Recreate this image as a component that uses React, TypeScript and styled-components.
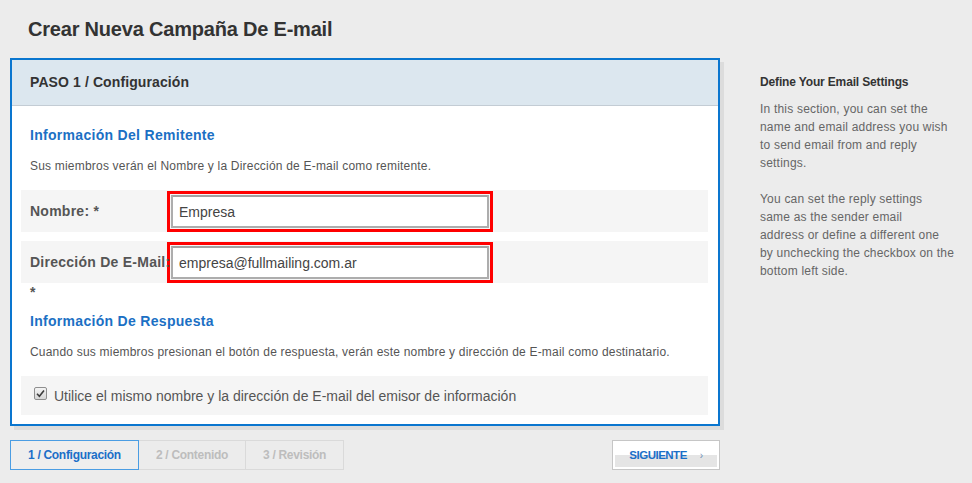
import React from "react";
import styled, { createGlobalStyle } from "styled-components";

const GlobalStyle = createGlobalStyle`
  html, body {
    margin: 0;
    padding: 0;
    background: #ececec;
  }
  body {
    font-family: "Liberation Sans", Arial, sans-serif;
    color: #555;
  }
  * {
    box-sizing: border-box;
  }
`;

const Page = styled.div`
  width: 972px;
  height: 483px;
  overflow: hidden;
`;

const PageTitle = styled.h1`
  margin: 0;
  padding-left: 28px;
  height: 58px;
  line-height: 58px;
  font-size: 20px;
  font-weight: bold;
  letter-spacing: -0.2px;
  color: #333;
`;

const Layout = styled.div`
  display: flex;
  align-items: flex-start;
  padding-left: 10px;
`;

const MainColumn = styled.div`
  width: 710px;
  flex-shrink: 0;
`;

const Panel = styled.section`
  border: 2px solid #0a76cf;
  background: #fff;
  box-shadow: 4px 4px 0 #dcdcdc;
`;

const PanelHeader = styled.div`
  height: 46px;
  line-height: 45px;
  background: #dce7ef;
  border-bottom: 1px solid #c3ccd4;
  padding-left: 18px;
  font-size: 14px;
  font-weight: bold;
  letter-spacing: 0.1px;
  color: #333;
`;

const PanelBody = styled.div`
  padding: 0 10px 9px 9px;
`;

const SectionTitle = styled.h2<{ $top: number }>`
  margin: ${(p) => p.$top}px 0 0 9px;
  font-size: 14px;
  line-height: 20px;
  font-weight: bold;
  letter-spacing: 0.3px;
  color: #1b70c4;
`;

const Description = styled.p`
  margin: 13px 0 0 9px;
  font-size: 12px;
  line-height: 16px;
  letter-spacing: 0.2px;
  color: #555;
`;

const FieldRow = styled.div<{ $top: number }>`
  display: flex;
  height: 42px;
  margin-top: ${(p) => p.$top}px;
  background: #f5f5f5;
`;

const FieldLabel = styled.label`
  position: relative;
  z-index: 1;
  width: 146px;
  flex-shrink: 0;
  padding: 6px 0 0 9px;
  font-size: 14px;
  line-height: 30px;
  font-weight: bold;
  letter-spacing: 0.25px;
  color: #555;
`;

const NoWrap = styled.span`
  white-space: nowrap;
`;

const Highlight = styled.div`
  width: 326px;
  height: 41px;
  margin-top: 1px;
  padding: 1px;
  border: 3px solid #f00;
`;

const TextInput = styled.input`
  display: block;
  width: 100%;
  height: 100%;
  margin: 0;
  padding: 0 6px;
  border: 2px solid #adadad;
  border-top-color: #a2a2a2;
  background: #fff;
  font-family: "Liberation Sans", Arial, sans-serif;
  font-size: 14px;
  color: #444;
  outline: none;
`;

const CheckRow = styled.label`
  display: flex;
  align-items: center;
  height: 39px;
  margin-top: 16px;
  padding-left: 13px;
  background: #f5f5f5;
  font-size: 14px;
  color: #555;
`;

const CheckBox = styled.span`
  display: flex;
  align-items: center;
  justify-content: center;
  width: 13px;
  height: 13px;
  margin-bottom: 4px;
  border: 1px solid #8f8f8f;
  border-radius: 2px;
  background: linear-gradient(#f4f4f4, #d6d6d6);
`;

const CheckText = styled.span`
  margin-left: 7px;
`;

const NavBar = styled.div`
  display: flex;
  justify-content: space-between;
  margin-top: 14px;
`;

const Tabs = styled.div`
  display: flex;
`;

const Tab = styled.div<{ $active?: boolean }>`
  position: relative;
  z-index: ${(p) => (p.$active ? 1 : 0)};
  height: 30px;
  padding: 0 17px;
  margin-left: -1px;
  line-height: 28px;
  border: 1px solid ${(p) => (p.$active ? "#4a9de3" : "#dadada")};
  background: ${(p) => (p.$active ? "#eeeeee" : "transparent")};
  font-size: 12px;
  font-weight: bold;
  letter-spacing: -0.3px;
  color: ${(p) => (p.$active ? "#1b6fc8" : "#bdbdbd")};
  &:first-child {
    margin-left: 0;
  }
`;

const NextButton = styled.button`
  display: flex;
  align-items: center;
  justify-content: center;
  gap: 13px;
  width: 108px;
  height: 30px;
  margin: 0;
  padding: 0;
  border: 1px solid #c6c6c6;
  background: linear-gradient(#fff 50%, #e5e5e5 50%);
  box-shadow: inset 0 0 0 2px #fff;
  font-family: "Liberation Sans", Arial, sans-serif;
  font-size: 11.5px;
  font-weight: bold;
  letter-spacing: -0.5px;
  color: #1b6fc8;
  cursor: pointer;
`;

const Chevron = styled.span`
  font-size: 10px;
  font-weight: normal;
  color: #6d8fb8;
`;

const Sidebar = styled.aside`
  width: 200px;
  margin-left: 40px;
  padding-top: 15px;
`;

const SideTitle = styled.h3`
  margin: 0;
  font-size: 12px;
  line-height: 18px;
  font-weight: bold;
  letter-spacing: -0.15px;
  color: #333;
`;

const SideText = styled.p<{ $top: number }>`
  margin: ${(p) => p.$top}px 0 0;
  font-size: 12px;
  line-height: 18px;
  letter-spacing: 0.2px;
  white-space: nowrap;
  color: #666;
`;

export default function App() {
  return (
    <Page>
      <GlobalStyle />
      <PageTitle>Crear Nueva Campaña De E-mail</PageTitle>
      <Layout>
        <MainColumn>
          <Panel>
            <PanelHeader>PASO 1 / Configuración</PanelHeader>
            <PanelBody>
              <SectionTitle $top={19}>Información Del Remitente</SectionTitle>
              <Description>
                Sus miembros verán el Nombre y la Dirección de E-mail como remitente.
              </Description>
              <FieldRow $top={16}>
                <FieldLabel>Nombre: *</FieldLabel>
                <Highlight>
                  <TextInput readOnly value="Empresa" />
                </Highlight>
              </FieldRow>
              <FieldRow $top={9}>
                <FieldLabel>
                  <NoWrap>Dirección De E-Mail:</NoWrap> *
                </FieldLabel>
                <Highlight>
                  <TextInput readOnly value="empresa@fullmailing.com.ar" />
                </Highlight>
              </FieldRow>
              <SectionTitle $top={28}>Información De Respuesta</SectionTitle>
              <Description>
                Cuando sus miembros presionan el botón de respuesta, verán este nombre y
                dirección de E-mail como destinatario.
              </Description>
              <CheckRow>
                <CheckBox>
                  <svg width="11" height="11" viewBox="0 0 11 11">
                    <path
                      d="M2 5.8 L4.4 8.2 L9 2.6"
                      fill="none"
                      stroke="#3c3c3c"
                      strokeWidth="1.6"
                    />
                  </svg>
                </CheckBox>
                <CheckText>
                  Utilice el mismo nombre y la dirección de E-mail del emisor de información
                </CheckText>
              </CheckRow>
            </PanelBody>
          </Panel>
          <NavBar>
            <Tabs>
              <Tab $active>1 / Configuración</Tab>
              <Tab>2 / Contenido</Tab>
              <Tab>3 / Revisión</Tab>
            </Tabs>
            <NextButton>
              <span>SIGUIENTE</span>
              <Chevron>›</Chevron>
            </NextButton>
          </NavBar>
        </MainColumn>
        <Sidebar>
          <SideTitle>Define Your Email Settings</SideTitle>
          <SideText $top={9}>
            In this section, you can set the
            <br />
            name and email address you wish
            <br />
            to send email from and reply
            <br />
            settings.
          </SideText>
          <SideText $top={18}>
            You can set the reply settings
            <br />
            same as the sender email
            <br />
            address or define a different one
            <br />
            by unchecking the checkbox on the
            <br />
            bottom left side.
          </SideText>
        </Sidebar>
      </Layout>
    </Page>
  );
}
